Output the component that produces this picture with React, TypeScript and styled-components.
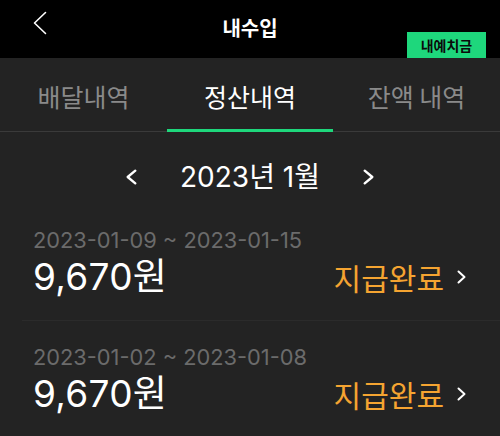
import styled, { createGlobalStyle } from "styled-components";

const GlobalStyle = createGlobalStyle`
  html, body {
    margin: 0;
    padding: 0;
    background: #232323;
  }
  body {
    font-family: "Inter", "Noto Sans CJK KR", sans-serif;
    -webkit-font-smoothing: antialiased;
  }
`;

const settlements = [
  { range: "2023-01-09 ~ 2023-01-15", amount: "9,670원", status: "지급완료" },
  { range: "2023-01-02 ~ 2023-01-08", amount: "9,670원", status: "지급완료" },
];

const tabs = ["배달내역", "정산내역", "잔액 내역"];

function Chevron(props: { dir: "left" | "right"; w: number; h: number; stroke: number }) {
  const { w, h, stroke } = props;
  const p = stroke / 2 + 0.5;
  const d =
    props.dir === "left"
      ? `M${w - p} ${p} L${p} ${h / 2} L${w - p} ${h - p}`
      : `M${p} ${p} L${w - p} ${h / 2} L${p} ${h - p}`;
  return (
    <svg width={w} height={h} viewBox={`0 0 ${w} ${h}`} fill="none">
      <path d={d} stroke="#fff" strokeWidth={stroke} strokeLinecap="round" strokeLinejoin="round" />
    </svg>
  );
}

export default function App() {
  return (
    <Page>
      <GlobalStyle />
      <Header>
        <BackButton>
          <svg width="14" height="24" viewBox="0 0 14 24" fill="none">
            <path d="M12.5 1.5 L1.5 12 L12.5 22.5" stroke="#fff" strokeWidth="1.6" strokeLinecap="round" strokeLinejoin="round" />
          </svg>
        </BackButton>
        <Title>내수입</Title>
        <Deposit>내예치금</Deposit>
      </Header>

      <Tabs>
        {tabs.map((t, key) => (
          <Tab key={key} $active={key === 1}>
            {t}
          </Tab>
        ))}
      </Tabs>

      <MonthNav>
        <Chevron dir="left" w={11} h={16} stroke={2.4} />
        <Month>2023년 1월</Month>
        <Chevron dir="right" w={11} h={16} stroke={2.4} />
      </MonthNav>

      <List>
        {settlements.map((item, key) => (
          <Item key={key}>
            <Range>{item.range}</Range>
            <AmountRow>
              <Amount>{item.amount}</Amount>
              <Status>
                {item.status}
                <Chevron dir="right" w={9} h={14} stroke={2} />
              </Status>
            </AmountRow>
          </Item>
        ))}
      </List>
    </Page>
  );
}

const Page = styled.div`
  width: 500px;
  min-height: 436px;
  background: #232323;
  overflow: hidden;
`;

const Header = styled.header`
  position: relative;
  height: 58px;
  background: #000;
  display: flex;
  justify-content: center;
`;

const BackButton = styled.div`
  position: absolute;
  left: 33px;
  top: 11px;
  display: flex;
`;

const Title = styled.h1`
  margin: 0;
  padding-top: 15px;
  font-family: "Noto Sans CJK KR", sans-serif;
  font-size: 20px;
  font-weight: 700;
  line-height: 26px;
  color: #fff;
`;

const Deposit = styled.div`
  position: absolute;
  right: 14px;
  bottom: 0;
  width: 79px;
  height: 26px;
  background: #1ed77c;
  color: #0b0b0b;
  font-family: "Noto Sans CJK KR", sans-serif;
  font-size: 14px;
  font-weight: 700;
  display: flex;
  align-items: center;
  justify-content: center;
`;

const Tabs = styled.nav`
  display: grid;
  grid-template-columns: 167px 166px 167px;
  height: 74px;
  border-bottom: 1px solid #3a3a3a;
  box-sizing: border-box;
`;

const Tab = styled.div<{ $active: boolean }>`
  display: flex;
  align-items: center;
  justify-content: center;
  padding-top: 2px;
  font-family: "Noto Sans CJK KR", sans-serif;
  font-size: 25px;
  font-weight: 400;
  color: ${(p) => (p.$active ? "#fff" : "#8a8a8a")};
  box-shadow: ${(p) => (p.$active ? "inset 0 -3px 0 #1ed77c" : "none")};
  margin-bottom: -1px;
`;

const MonthNav = styled.div`
  display: flex;
  align-items: center;
  justify-content: center;
  gap: 43px;
  padding: 30px 0 12px;
  height: 30px;
`;

const Month = styled.div`
  font-size: 28px;
  line-height: 30px;
  color: #fff;
`;

const List = styled.ul`
  margin: 0;
  padding: 0;
  list-style: none;
`;

const Item = styled.li`
  margin-left: 22px;
  padding: 21px 34px 21px 11px;
  border-bottom: 1px solid #2b2b2b;
`;

const Range = styled.div`
  font-size: 21.8px;
  line-height: 30px;
  color: #6b6b6b;
`;

const AmountRow = styled.div`
  display: flex;
  align-items: center;
  justify-content: space-between;
  height: 44px;
`;

const Amount = styled.div`
  font-size: 37px;
  line-height: 44px;
  color: #fff;
  letter-spacing: 0.3px;
`;

const Status = styled.div`
  display: flex;
  align-items: center;
  gap: 13px;
  font-family: "Noto Sans CJK KR", sans-serif;
  font-size: 30px;
  color: #f5a431;
`;
